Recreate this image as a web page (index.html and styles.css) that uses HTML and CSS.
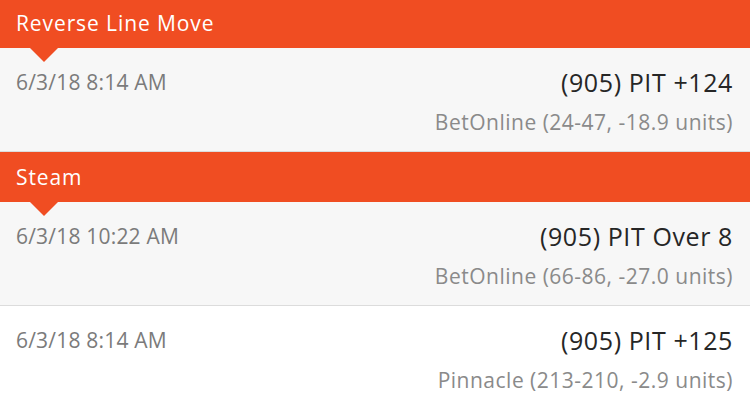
FILE: index.html
```html
<!DOCTYPE html>
<html>
<head>
  <link rel="stylesheet" href="styles.css">
</head>
<body>
  <div class="feed">
    <div class="section-header">Reverse Line Move</div>
    <div class="pick-row">
      <div class="pick-date">6/3/18 8:14 AM</div>
      <div class="pick-info">
        <div class="pick-title">(905) PIT +124</div>
        <div class="pick-book">BetOnline (24-47, -18.9 units)</div>
      </div>
    </div>

    <div class="section-header">Steam</div>
    <div class="pick-row">
      <div class="pick-date">6/3/18 10:22 AM</div>
      <div class="pick-info">
        <div class="pick-title">(905) PIT Over 8</div>
        <div class="pick-book">BetOnline (66-86, -27.0 units)</div>
      </div>
    </div>
    <div class="pick-row white">
      <div class="pick-date">6/3/18 8:14 AM</div>
      <div class="pick-info">
        <div class="pick-title">(905) PIT +125</div>
        <div class="pick-book">Pinnacle (213-210, -2.9 units)</div>
      </div>
    </div>
  </div>
</body>
</html>
```

FILE: styles.css
```css
body {
  margin: 0;
  padding: 0;
  font-family: "Open Sans", Lato, sans-serif;
  background-color: #fff;
  overflow: hidden;
}

.feed {
  margin-top: -2px; /* top of first header is cut off in the view */
}

.section-header {
  position: relative;
  height: 50px;
  line-height: 50px;
  padding-left: 16px;
  background-color: #f04d22;
  color: #fff;
  font-size: 21px;
  letter-spacing: 0.9px;
}

/* little pointer under the header */
.section-header::after {
  content: "";
  position: absolute;
  left: 30px;
  bottom: -14px;
  border-left: 14px solid transparent;
  border-right: 14px solid transparent;
  border-top: 14px solid #f04d22;
}

.pick-row {
  display: flex;
  justify-content: space-between;
  align-items: flex-start;
  height: 104px;
  box-sizing: border-box;
  padding: 19px 17px 0 16px;
  background-color: #f7f7f7;
  border-bottom: 1px solid #dcdcdc;
}

.pick-row.white {
  background-color: #fff;
  border-bottom: none;
}

.pick-date {
  margin-top: 2px;
  font-size: 21px;
  line-height: 26px;
  letter-spacing: 0.2px;
  color: #7b7b7b;
}

.pick-info {
  text-align: right;
}

.pick-title {
  font-size: 25px;
  line-height: 30px;
  letter-spacing: 0.6px;
  color: #262626;
}

.pick-book {
  margin-top: 12px;
  font-size: 21px;
  line-height: 26px;
  letter-spacing: 0.5px;
  color: #8a8a8a;
}
```
